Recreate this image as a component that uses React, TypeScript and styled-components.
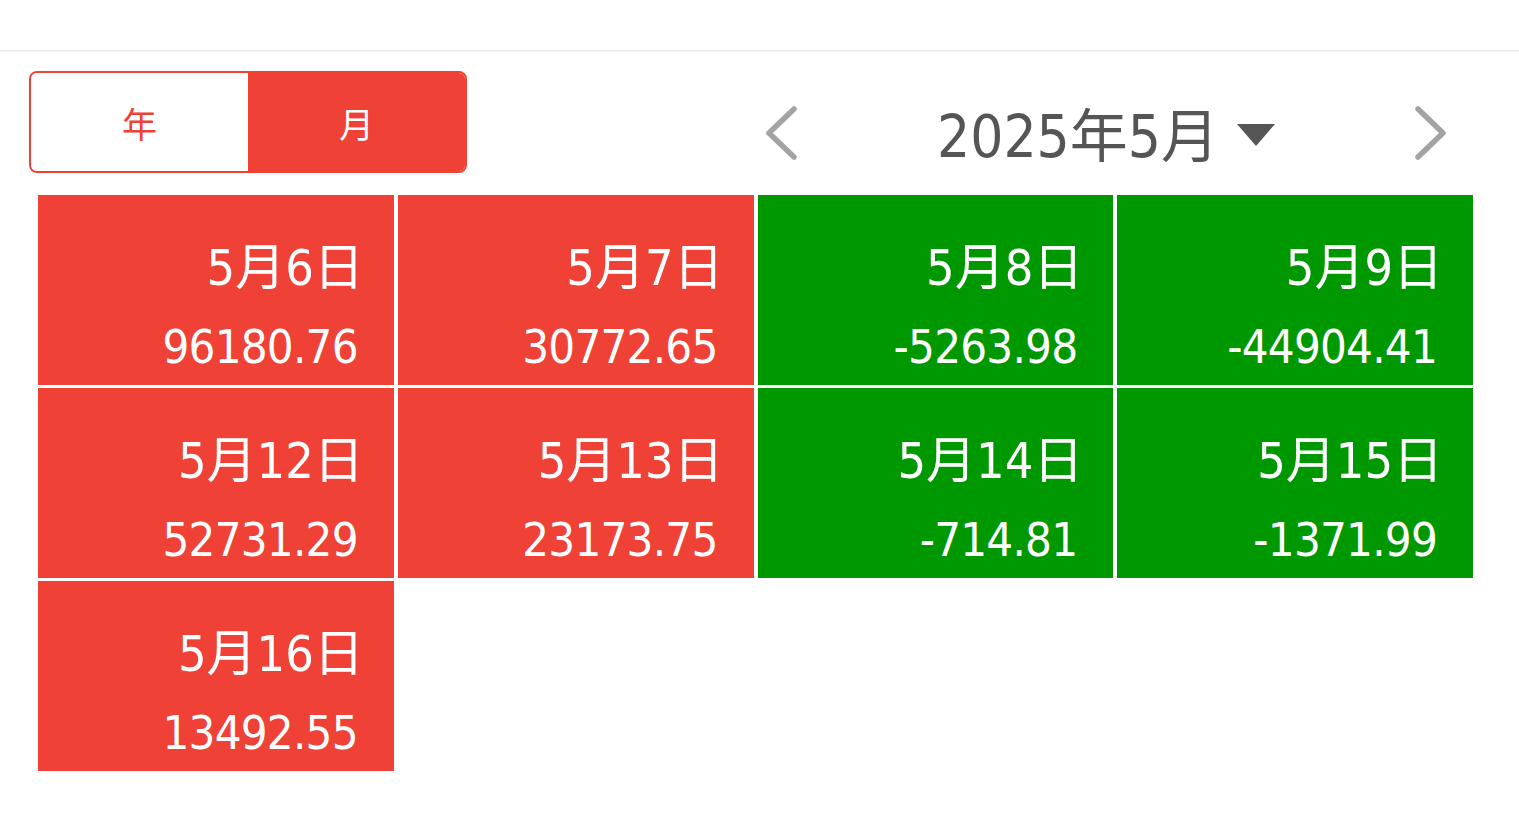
import React from 'react'
import styled, { createGlobalStyle } from 'styled-components'

interface Day {
    date: string
    amount: string
}

const days: Day[] = [
    { date: '5月6日', amount: '96180.76' },
    { date: '5月7日', amount: '30772.65' },
    { date: '5月8日', amount: '-5263.98' },
    { date: '5月9日', amount: '-44904.41' },
    { date: '5月12日', amount: '52731.29' },
    { date: '5月13日', amount: '23173.75' },
    { date: '5月14日', amount: '-714.81' },
    { date: '5月15日', amount: '-1371.99' },
    { date: '5月16日', amount: '13492.55' },
]

const RED = '#ef4136'
const GREEN = '#009800'
const NARROW = `"Liberation Sans Narrow", "DejaVu Sans Condensed", Roboto, "Noto Sans CJK SC", sans-serif`

const GlobalStyle = createGlobalStyle`
    body {
        margin: 0;
        background: #fff;
        font-family: Roboto, "Noto Sans CJK SC", sans-serif;
    }
`

const Page = styled.div`
    width: 1519px;
    height: 814px;
    overflow: hidden;
`

const TopBar = styled.div`
    height: 50px;
    border-bottom: 2px solid #eeeeee;
`

const Controls = styled.div`
    display: flex;
    align-items: flex-start;
    padding: 19px 0 0 29px;
`

const Toggle = styled.div`
    display: flex;
    width: 438px;
    height: 102px;
    box-sizing: border-box;
    border: 2px solid ${RED};
    border-radius: 8px;
    overflow: hidden;
`

const ToggleItem = styled.div<{ $active?: boolean }>`
    flex: 1;
    display: flex;
    align-items: center;
    justify-content: center;
    font-family: "Noto Sans CJK SC", sans-serif;
    font-size: 35px;
    background: ${p => (p.$active ? RED : '#fff')};
    color: ${p => (p.$active ? '#fff' : RED)};
`

const MonthNav = styled.div`
    display: flex;
    align-items: center;
    justify-content: space-between;
    width: 688px;
    height: 60px;
    margin: 36px 0 0 295px;
`

const Arrow = styled.svg`
    width: 38px;
    height: 56px;
    margin-top: -9px;
`

const Title = styled.div`
    display: flex;
    align-items: center;
    gap: 18px;
    color: #555;
    font-family: ${NARROW};
    font-size: 58px;
    line-height: 60px;
`

const Caret = styled.span`
    width: 0;
    height: 0;
    margin-top: -4px;
    border-left: 19px solid transparent;
    border-right: 19px solid transparent;
    border-top: 22px solid #555;
`

const Grid = styled.div`
    display: grid;
    grid-template-columns: repeat(4, 1fr);
    grid-auto-rows: 190px;
    gap: 3px 4px;
    width: 1435px;
    margin: 22px 0 0 38px;
`

const Cell = styled.div<{ $up: boolean }>`
    display: flex;
    flex-direction: column;
    align-items: flex-end;
    padding: 45px 30px 0 0;
    background: ${p => (p.$up ? RED : GREEN)};
    color: #fff;
    font-family: ${NARROW};
    font-size: 50px;
`

const DateText = styled.div`
    line-height: 56px;
`

const Amount = styled.div`
    font-size: 47px;
    line-height: 56px;
    letter-spacing: -0.8px;
    margin: 23px 6px 0 0;
`

const Chevron = ({ dir }: { dir: 'left' | 'right' }) => (
    <Arrow viewBox="0 0 38 56" fill="none" stroke="#a3a3a3" strokeWidth="5.5" strokeLinecap="round" strokeLinejoin="round">
        {dir === 'left' ? <polyline points="32,4 7,28 32,52" /> : <polyline points="6,4 31,28 6,52" />}
    </Arrow>
)

const App = () => {
    return (
        <Page>
            <GlobalStyle />
            <TopBar />
            <Controls>
                <Toggle>
                    <ToggleItem>年</ToggleItem>
                    <ToggleItem $active>月</ToggleItem>
                </Toggle>
                <MonthNav>
                    <Chevron dir="left" />
                    <Title>
                        2025年5月
                        <Caret />
                    </Title>
                    <Chevron dir="right" />
                </MonthNav>
            </Controls>
            <Grid>
                {days.map(d => (
                    <Cell key={d.date} $up={!d.amount.startsWith('-')}>
                        <DateText>{d.date}</DateText>
                        <Amount>{d.amount}</Amount>
                    </Cell>
                ))}
            </Grid>
        </Page>
    )
}

export default App
